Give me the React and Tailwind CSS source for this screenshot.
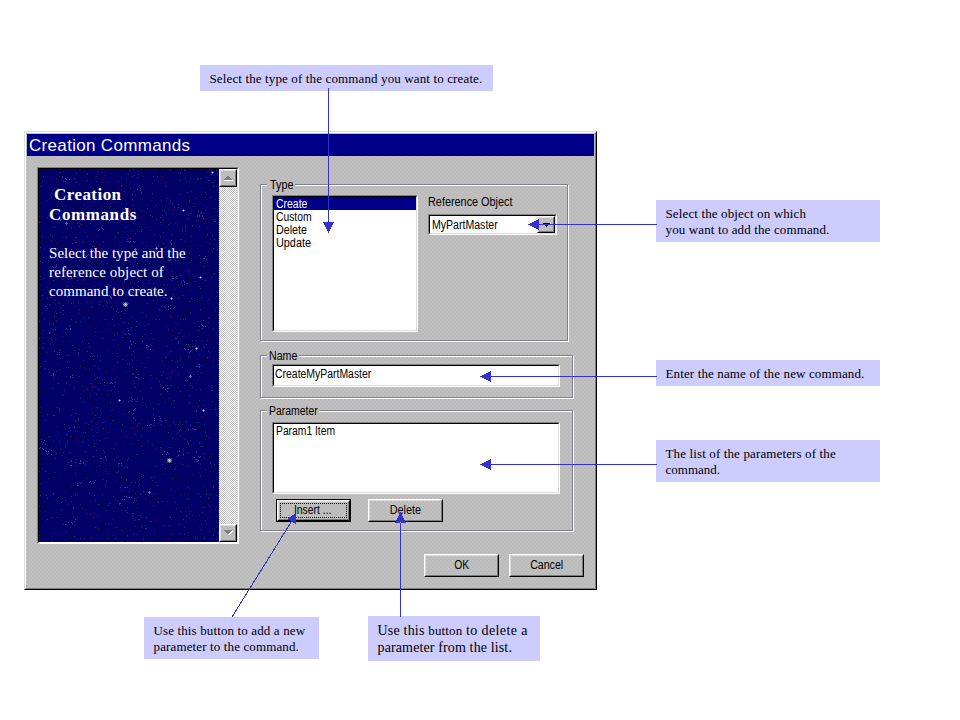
// Annotated "Creation Commands" dialog with callouts and arrows.

const DITHER =
  'bg-[#bdbdbd] bg-[repeating-conic-gradient(#c0c0c0_0_25%,#bababa_0_50%)] bg-size-[4px_4px]';
const NAVY =
  'bg-[#00007c] bg-[repeating-conic-gradient(#000088_0_25%,#000070_0_50%)] bg-size-[2px_2px]';
const RAISED = 'border border-t-white border-l-white border-r-black border-b-black';
const RAISED_IN =
  'border border-t-[#dcdcdc] border-l-[#dcdcdc] border-r-[#7a7a7a] border-b-[#7a7a7a]';

function Sans({ children, className = 'scale-x-[.87]' }) {
  return <span className={`inline-block origin-left translate-y-px ${className}`}>{children}</span>;
}

function Sunken({ className, children }) {
  return (
    <div className={`flex border border-t-[#808080] border-l-[#808080] border-r-white border-b-white ${className}`}>
      <div className="flex min-w-0 flex-1 flex-col border border-t-black border-l-black border-r-[#dcdcdc] border-b-[#dcdcdc] bg-white">
        {children}
      </div>
    </div>
  );
}

function Group({ label, labelClass, scale, className, children }) {
  return (
    <section
      className={`flex flex-col border border-[#808088] pl-[11px] shadow-[1px_1px_0_#fff,inset_1px_1px_0_#fff] ${className}`}
    >
      <div className={`-mt-[7px] -ml-[5px] h-[13px] shrink-0 ${DITHER} ${labelClass}`}>
        <Sans className={scale}>{label}</Sans>
      </div>
      {children}
    </section>
  );
}

function Button({ children, scale, focused }) {
  return (
    <button
      className={`flex h-[23px] w-[75px] leading-[13px] ${focused ? 'border border-black' : ''}`}
    >
      <span className={`flex h-full w-full ${RAISED}`}>
        <span className={`flex h-full w-full items-center justify-center ${RAISED_IN} ${DITHER}`}>
          <span
            className={
              focused
                ? 'flex h-[15px] w-[67px] items-center justify-center border border-dotted border-black pr-[2px]'
                : 'flex'
            }
          >
            <span className={`block ${scale}`}>{children}</span>
          </span>
        </span>
      </span>
    </button>
  );
}

function ScrollButton({ down }) {
  return (
    <div className={`h-[18px] w-[18px] ${RAISED}`}>
      <div className={`flex h-full w-full items-center justify-center ${RAISED_IN} ${DITHER}`}>
        <svg width="10" height="6" viewBox="0 0 10 6" shapeRendering="crispEdges">
          {down ? (
            <>
              <path d="M2 1h8L6 6z" fill="#fff" />
              <path d="M1 0h8L5 5z" fill="#808080" />
            </>
          ) : (
            <>
              <path d="M1 5h9v1H1z" fill="#fff" />
              <path d="M5 0l4 5H0z" fill="#808080" />
            </>
          )}
        </svg>
      </div>
    </div>
  );
}

// Deterministic speckles of the night sky.
const SPECKS = (() => {
  let s = 77;
  const rnd = () => {
    s = (s * 16807) % 2147483647;
    return s / 2147483647;
  };
  const out = [];
  const faint = ['#003a5c', '#3a0064', '#000030', '#000020', '#2c2c86', '#06465a', '#48005c'];
  for (let i = 0; i < 2300; i++) {
    out.push([Math.floor(rnd() * 180), Math.floor(rnd() * 373), faint[Math.floor(rnd() * 7)]]);
  }
  for (let c = 0; c < 60; c++) {
    const x = rnd() * 172;
    const y = rnd() * 365;
    for (let i = 0; i < 5; i++) {
      out.push([Math.floor(x + rnd() * 7), Math.floor(y + rnd() * 5), '#3a3a94']);
    }
  }
  return out;
})();

const STARS = [
  [144, 41], [117, 79], [161, 108], [132, 129], [173, 3], [80, 231],
  [164, 241], [157, 179], [110, 323], [151, 207], [96, 80], [27, 54],
];

function Sky() {
  return (
    <svg className="absolute inset-0" width="180" height="373" shapeRendering="crispEdges">
      {SPECKS.map(([x, y, c], i) => (
        <rect key={i} x={x} y={y} width="1" height="1" fill={c} />
      ))}
      {STARS.map(([x, y], i) => (
        <g key={i} fill="#5c5cc0">
          <rect x={x - 1} y={y} width="3" height="1" />
          <rect x={x} y={y - 1} width="1" height="3" />
          {i < 8 && <rect x={x} y={y} width="1" height="1" fill="#c8c8f8" />}
        </g>
      ))}
      {[[86, 135], [130, 291]].map(([x, y]) => (
        <g key={x}>
          <rect x={x - 2} y={y - 2} width="5" height="5" fill="#1f3d6a" />
          <rect x={x - 2} y={y} width="5" height="1" fill="#5c7c94" />
          <rect x={x} y={y - 2} width="1" height="5" fill="#5c7c94" />
          <rect x={x - 1} y={y - 1} width="3" height="3" fill="#98a8b0" />
          <rect x={x} y={y} width="1" height="1" fill="#fff" />
        </g>
      ))}
    </svg>
  );
}

function Callout({ className, children }) {
  return (
    <div
      className={`absolute bg-[#ccccff] pt-[6px] pl-[9.500px] font-['Liberation_Serif',serif] text-[13px] leading-4 tracking-[0.13px] whitespace-nowrap ${className}`}
    >
      {children}
    </div>
  );
}

function Arrows() {
  return (
    <svg
      className="absolute inset-0"
      width="960"
      height="720"
      fill="#3333cc"
      stroke="none"
      shapeRendering="crispEdges"
    >
      <path d="M328 88h1v135h-1zM323 222h11l-5.500 11z" />
      <path d="M538 224h119v1H538zM539 219v11l-11-5.500z" />
      <path d="M490 376h167v1H490zM491 371v11l-11-5.500z" />
      <path d="M490 464h167v1H490zM491 459v11l-11-5.500z" />
      <path d="M400 522h1v95h-1zM395 523h11l-5.500-11z" />
      <path d="M232 617L293 519" stroke="#3333cc" strokeWidth="1" />
      <path d="M296 513v11l-9-5z" />
    </svg>
  );
}

export default function App() {
  return (
    <main className="relative h-[720px] w-[960px] overflow-hidden bg-white font-['Liberation_Sans',Arial,sans-serif] text-[12px] leading-[13px] text-black">
      <div className="absolute top-[131px] left-[24px] flex h-[459px] w-[573px] border border-t-[#dcdcdc] border-l-[#dcdcdc] border-r-black border-b-black">
        <div
          className={`flex min-w-0 flex-1 flex-col border border-t-white border-l-white border-r-[#808080] border-b-[#808080] p-px ${DITHER}`}
        >
          <header
            className={`h-[22px] shrink-0 pl-[2px] text-[17px] leading-[24px] tracking-[0.32px] text-white ${NAVY}`}
          >
            Creation Commands
          </header>

          <div className="flex">
            <div className="mt-[11px] ml-[10px] flex h-[377px] w-[202px] border border-t-[#808080] border-l-[#808080] border-r-white border-b-white">
              <div className="flex flex-1 border border-t-black border-l-black border-r-[#dcdcdc] border-b-white">
                <div className="relative w-[180px] bg-[#000066]">
                  <Sky />
                  <div className="relative pt-4 pl-[10px] font-['Liberation_Serif',serif] text-[15px] leading-[19px] text-white">
                    <h1 className="text-[17px] leading-5 font-bold tracking-[0.6px]">
                      <span className="block pl-[5px] tracking-[0.45px]">Creation</span>
                      <span className="block">Commands</span>
                    </h1>
                    <p className="mt-[19px] tracking-[0.04px] whitespace-nowrap">
                      Select the type and the
                      <br />
                      <span className="tracking-[0.13px]">reference object of</span>
                      <br />
                      command to create.
                    </p>
                  </div>
                </div>
                <div className="flex w-[18px] flex-col justify-between bg-[repeating-conic-gradient(#fff_0_25%,#c0c0c0_0_50%)] bg-size-[2px_2px]">
                  <ScrollButton />
                  <ScrollButton down />
                </div>
              </div>
            </div>

            <div className="mt-[28px] ml-[21px] flex flex-col">
              <Group
                label="Type"
                labelClass="w-[28px] pl-[3px]"
                scale="scale-x-[.9]"
                className="h-[157px] w-[308px]"
              >
                <div className="mt-1 flex">
                  <Sunken className="h-[137px] w-[146px]">
                    <div className={`h-[13px] pl-[2px] text-white ${NAVY}`}>
                      <Sans>Create</Sans>
                    </div>
                    <div className="pl-[2px]">
                      <Sans className="scale-x-[.86]">Custom</Sans>
                    </div>
                    <div className="pl-[2px]">
                      <Sans className="scale-x-[.894]">Delete</Sans>
                    </div>
                    <div className="pl-[2px]">
                      <Sans className="scale-x-[.904]">Update</Sans>
                    </div>
                  </Sunken>
                  <div className="ml-[10px] flex flex-col">
                    <span className="whitespace-nowrap">
                      <Sans className="scale-x-[.905]">Reference Object</Sans>
                    </span>
                    <Sunken className="mt-[6px] h-[21px] w-[129px]">
                      <div className="flex h-full">
                        <div className="flex-1 pt-[2px] pl-[2px]">
                          <Sans className="scale-x-[.88]">MyPartMaster</Sans>
                        </div>
                        <div className={`w-[18px] ${RAISED}`}>
                          <div className={`flex h-full items-center justify-center ${RAISED_IN} ${DITHER}`}>
                            <svg width="7" height="4" viewBox="0 0 7 4" shapeRendering="crispEdges">
                              <path d="M0 0h7L3.500 4z" />
                            </svg>
                          </div>
                        </div>
                      </div>
                    </Sunken>
                  </div>
                </div>
              </Group>

              <Group
                label="Name"
                labelClass="w-[32px] pl-[2px]"
                scale="scale-x-[.885]"
                className="mt-[14px] h-[43px] w-[313px]"
              >
                <Sunken className="mt-[2px] h-[23px] w-[288px]">
                  <div className="pt-px pl-px">
                    <Sans>CreateMyPartMaster</Sans>
                  </div>
                </Sunken>
              </Group>

              <Group
                label="Parameter"
                labelClass="w-[52px] pl-[2px]"
                scale="scale-x-[.87]"
                className="mt-[12px] h-[121px] w-[313px]"
              >
                <Sunken className="mt-[5px] h-[72px] w-[288px]">
                  <div className="pl-[2px]">
                    <Sans className="scale-x-[.86]">Param1 Item</Sans>
                  </div>
                </Sunken>
                <div className="mt-[5px] ml-1 flex gap-[17px]">
                  <Button scale="scale-x-[.865]" focused>
                    Insert ...
                  </Button>
                  <Button scale="scale-x-[.9]">Delete</Button>
                </div>
              </Group>

              <div className="mt-[23px] ml-[164px] flex gap-[10px]">
                <Button scale="scale-x-[.86]">OK</Button>
                <Button scale="scale-x-[.883]">Cancel</Button>
              </div>
            </div>
          </div>
        </div>
      </div>

      <Callout className="top-[65px] left-[200px] h-[26px] w-[293px]">
        Select the type of the command you want to create.
      </Callout>
      <Callout className="top-[200px] left-[656px] h-[42px] w-[224px]">
        Select the object on which
        <br />
        you want to add the command.
      </Callout>
      <Callout className="top-[360px] left-[656px] h-[26px] w-[224px]">
        Enter the name of the new command.
      </Callout>
      <Callout className="top-[440px] left-[656px] h-[42px] w-[224px]">
        The list of the parameters of the
        <br />
        <span className="tracking-normal">command.</span>
      </Callout>
      <Callout className="top-[617px] left-[144px] h-[42px] w-[175px]">
        Use this button to add a new
        <br />
        parameter to the command.
      </Callout>
      <Callout className="top-[616px] left-[368px] h-[45px] w-[172px] text-[14px] leading-[17px]">
        <span className="tracking-[0.2px]">Use this </span>
        <span className="text-[13px]">button</span>{' '}
        <span className="tracking-[0.4px]">to delete a</span>
        <br />
        parameter from the list.
      </Callout>

      <Arrows />
    </main>
  );
}
